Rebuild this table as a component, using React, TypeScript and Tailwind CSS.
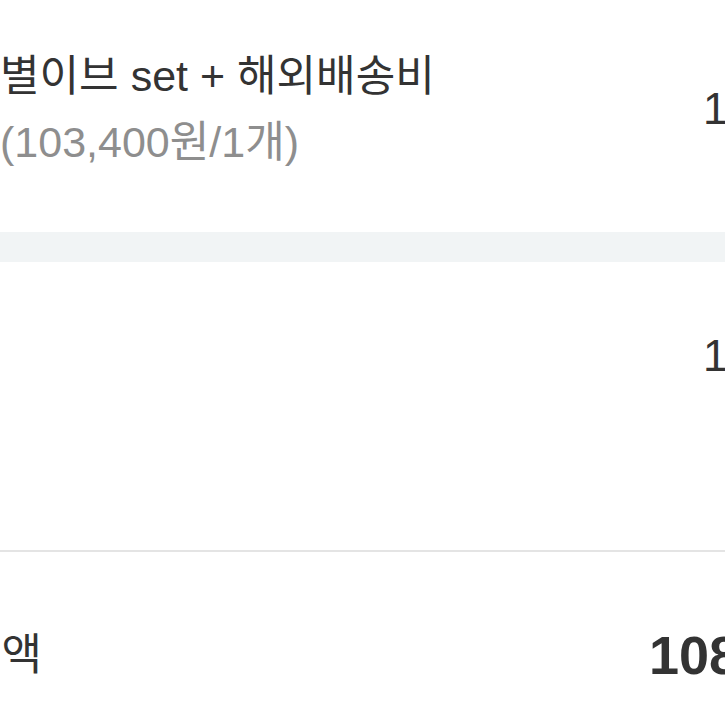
export default function App() {
  const font = { fontFamily: '"Liberation Sans", "Noto Sans CJK KR", sans-serif' }

  return (
    <main className="w-[725px] h-[725px] overflow-hidden bg-white text-[#333333]" style={font}>
      {/* 상품 행 */}
      <div className="h-[232px] flex items-start">
        <div className="flex-1 mt-[43px] text-[43px] leading-[66px] whitespace-nowrap">
          <div>별이브 set + 해외배송비</div>
          <div className="text-[#8e8e8e]">(103,400원/1개)</div>
        </div>
        <div className="w-[22px] mt-[76px] text-[44px] leading-[66px] whitespace-nowrap">1개</div>
      </div>

      <div className="h-[30px] bg-[#f1f4f5]" />

      {/* 배송비 행 */}
      <div className="h-[288px] flex items-start">
        <div className="flex-1" />
        <div className="w-[22px] mt-[61px] text-[44px] leading-[66px] whitespace-nowrap">1개</div>
      </div>

      <div className="h-[2px] bg-[#e4e4e4]" />

      {/* 총 결제금액 */}
      <div className="flex items-center justify-between pt-[70px]">
        <div className="w-[42px] flex justify-end whitespace-nowrap text-[44px] leading-[66px]">
          총 결제금액
        </div>
        <div className="w-[76px] whitespace-nowrap text-[54px] leading-[66px] font-bold">108,400원</div>
      </div>
    </main>
  )
}
